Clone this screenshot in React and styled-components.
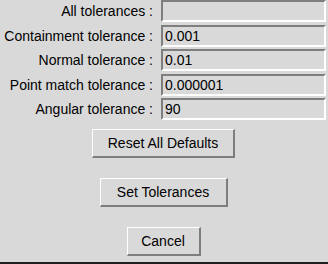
import { Fragment } from "react";
import styled, { createGlobalStyle } from "styled-components";

const GlobalStyle = createGlobalStyle`
  html, body {
    margin: 0;
    padding: 0;
    background: #d9d9d9;
  }
  body {
    font-family: "Liberation Sans", Arial, sans-serif;
  }
`;

const Dialog = styled.div`
  width: 328px;
  height: 264px;
  box-sizing: border-box;
  background: #d9d9d9;
  border-bottom: 2px solid #1e1e1e;
  display: flex;
  flex-direction: column;
  overflow: hidden;
`;

const Form = styled.div`
  display: grid;
  grid-template-columns: 153px 1fr;
  column-gap: 8px;
  row-gap: 2.5px;
  padding-right: 2px;
`;

const Label = styled.label`
  text-align: right;
  font-size: 14px;
  line-height: 22px;
  color: #000;
  white-space: nowrap;
`;

const Field = styled.input`
  height: 22px;
  box-sizing: border-box;
  margin: 0;
  padding: 0 0 0 2px;
  border-style: solid;
  border-width: 2px;
  border-color: #7e7e7e #fff #fff #7e7e7e;
  background: #d9d9d9;
  font-family: "Liberation Sans", Arial, sans-serif;
  font-size: 14px;
  color: #000;
  outline: none;
  width: 100%;
`;

const Actions = styled.div`
  display: flex;
  flex-direction: column;
  align-items: center;
  gap: 20px;
  padding-top: 8.5px;
  padding-right: 1px;
`;

const Button = styled.button`
  width: ${(p) => p.$w}px;
  height: 29px;
  box-sizing: border-box;
  margin: 0;
  padding: 0;
  border-style: solid;
  border-width: 1px 2px 2px 1px;
  border-color: #fff #7e7e7e #7e7e7e #fff;
  background: #d9d9d9;
  font-family: "Liberation Sans", Arial, sans-serif;
  font-size: 14px;
  color: #000;
`;

const rows = [
  ["All tolerances :", ""],
  ["Containment tolerance :", "0.001"],
  ["Normal tolerance :", "0.01"],
  ["Point match tolerance :", "0.000001"],
  ["Angular tolerance :", "90"],
];

export default function App() {
  return (
    <>
      <GlobalStyle />
      <Dialog>
        <Form>
          {rows.map(([label, value]) => (
            <Fragment key={label}>
              <Label>{label}</Label>
              <Field defaultValue={value} />
            </Fragment>
          ))}
        </Form>
        <Actions>
          <Button $w={143}>Reset All Defaults</Button>
          <Button $w={128}>Set Tolerances</Button>
          <Button $w={74}>Cancel</Button>
        </Actions>
      </Dialog>
    </>
  );
}
